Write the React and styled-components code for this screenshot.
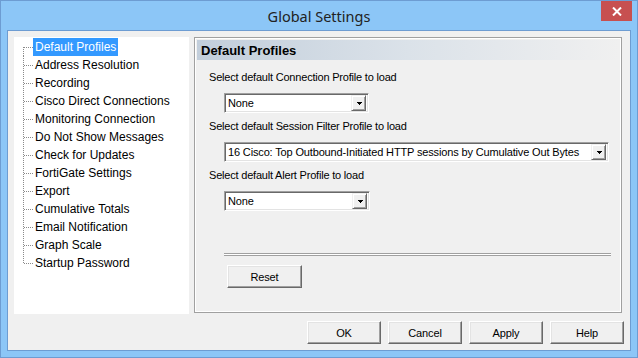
import React from 'react';
import styled, { createGlobalStyle } from 'styled-components';

const Global = createGlobalStyle`
  html, body { margin: 0; padding: 0; background: #8cc6f7; }
  body { width: 638px; height: 358px; overflow: hidden; }
  * { box-sizing: border-box; }
`;

const Window = styled.div`
  position: relative;
  width: 638px;
  height: 358px;
  border: 1px solid #6d9cd2;
  background: #8cc6f7;
  display: flex;
  flex-direction: column;
  font-family: "Liberation Sans", Arial, sans-serif;
`;

const TitleBar = styled.div`
  height: 29px;
  display: flex;
  align-items: center;
  justify-content: center;
  font-family: "Noto Sans", "Open Sans", sans-serif;
  font-size: 14.5px;
  color: #222;
  padding-top: 1px;
`;

const CloseButton = styled.div`
  position: absolute;
  top: 0;
  right: 5px;
  width: 31px;
  height: 20px;
  background: #c75050;
  display: flex;
  align-items: center;
  justify-content: center;
`;

const Client = styled.div`
  flex: 1;
  margin: 0 6px 6px 6px;
  border: 1px solid #6d9cd2;
  background: #f0f0f0;
  padding: 6px 6px 6px 6px;
  display: flex;
  flex-direction: column;
`;

const MainRow = styled.div`
  display: flex;
  align-items: flex-start;
  gap: 5px;
`;

const Tree = styled.div`
  width: 175px;
  height: 277px;
  background: #fff;
  padding-top: 1px;
  display: flex;
  flex-direction: column;
`;

const TreeItem = styled.div`
  height: 18px;
  display: flex;
  align-items: stretch;
`;

const dots = '#8a8a8a';

const Connector = styled.span`
  width: 19px;
  flex: none;
  background-image:
    repeating-linear-gradient(to right, ${dots} 0 1px, transparent 1px 2px),
    repeating-linear-gradient(to bottom, ${dots} 0 1px, transparent 1px 2px);
  background-repeat: no-repeat;
  background-size: 9px 1px, 1px ${p => (p.$first || p.$last ? '10px' : '18px')};
  background-position: 10px 9px, 9px ${p => (p.$first ? '9px' : '0px')};
`;

const TreeLabel = styled.span`
  padding: 0 2px;
  line-height: 18px;
  font-size: 12px;
  font-family: "Liberation Sans", Arial, sans-serif;
  white-space: nowrap;
  color: ${p => (p.$selected ? '#fff' : '#000')};
  background: ${p => (p.$selected ? '#3399ff' : 'transparent')};
`;

const Panel = styled.div`
  width: 428px;
  flex: none;
  height: 276px;
  border: 1px solid #a0a0a0;
  box-shadow: inset 1px 1px 0 #fff, inset -1px -1px 0 #fff;
  padding: 2px;
  display: flex;
  flex-direction: column;
`;

const PanelHeader = styled.div`
  height: 20px;
  padding-left: 4px;
  display: flex;
  align-items: center;
  background: linear-gradient(to right, #c2cedb 0%, #dbe2e9 50%, #f0f0f0 100%);
  font-weight: bold;
  font-size: 13px;
  color: #000;
`;

const PanelBody = styled.div`
  padding: 8px 0 0 12px;
  display: flex;
  flex-direction: column;
  align-items: flex-start;
`;

const FieldLabel = styled.div`
  height: 18px;
  line-height: 18px;
  font-size: 11px;
  letter-spacing: -0.2px;
  color: #000;
  white-space: nowrap;
`;

const Combo = styled.div`
  width: ${p => p.$w}px;
  height: 20px;
  margin: 7px 0 4px 15px;
  border-top: 1px solid #a0a0a0;
  border-left: 1px solid #a0a0a0;
  border-bottom: 1px solid #fff;
  border-right: 1px solid #fff;
  box-shadow: inset 1px 1px 0 #696969, inset -1px -1px 0 #e3e3e3;
  background: #fff;
  display: flex;
  align-items: center;
  padding: 0 2px 0 3px;
`;

const ComboText = styled.span`
  flex: 1;
  font-size: 11px;
  letter-spacing: -0.15px;
  color: #000;
  white-space: nowrap;
  overflow: hidden;
`;

const ComboArrow = styled.span`
  width: 15px;
  height: 16px;
  flex: none;
  background: #f0f0f0;
  border-top: 1px solid #f0f0f0;
  border-left: 1px solid #f0f0f0;
  border-right: 1px solid #696969;
  border-bottom: 1px solid #696969;
  box-shadow: inset 1px 1px 0 #fff, inset -1px -1px 0 #a0a0a0;
  display: flex;
  align-items: center;
  justify-content: center;
  padding-left: 1px;
`;

const Separator = styled.div`
  width: 387px;
  height: 3px;
  margin: 38px 0 0 15px;
  border-top: 1px solid #a0a0a0;
  border-bottom: 1px solid #a0a0a0;
  background: #fff;
`;

const Button = styled.div`
  width: ${p => p.$w || 74}px;
  height: 23px;
  flex: none;
  margin: ${p => p.$m || '0'};
  background: #f0f0f0;
  border-top: 1px solid #fff;
  border-left: 1px solid #fff;
  border-right: 1px solid #696969;
  border-bottom: 1px solid #696969;
  box-shadow: inset -1px -1px 0 #a0a0a0, inset 1px 1px 0 #e3e3e3;
  display: flex;
  align-items: center;
  justify-content: center;
  font-size: 11px;
  letter-spacing: -0.15px;
  color: #000;
`;

const ButtonRow = styled.div`
  margin-top: 7px;
  display: flex;
  justify-content: flex-end;
  gap: 7px;
`;

const Arrow = () => (
  <svg width="5" height="3" viewBox="0 0 5 3" shapeRendering="crispEdges">
    <rect x="0" y="0" width="5" height="1" fill="#000" />
    <rect x="1" y="1" width="3" height="1" fill="#000" />
    <rect x="2" y="2" width="1" height="1" fill="#000" />
  </svg>
);

const items = [
  'Default Profiles',
  'Address Resolution',
  'Recording',
  'Cisco Direct Connections',
  'Monitoring Connection',
  'Do Not Show Messages',
  'Check for Updates',
  'FortiGate Settings',
  'Export',
  'Cumulative Totals',
  'Email Notification',
  'Graph Scale',
  'Startup Password',
];

const fields = [
  { label: 'Select default Connection Profile to load', value: 'None', w: 145 },
  {
    label: 'Select default Session Filter Profile to load',
    value: '16 Cisco: Top Outbound-Initiated HTTP sessions by Cumulative Out Bytes',
    w: 385,
  },
  { label: 'Select default Alert Profile to load', value: 'None', w: 146 },
];

export default function App() {
  return (
    <>
      <Global />
      <Window>
        <TitleBar>Global Settings</TitleBar>
        <CloseButton>
          <svg width="10" height="9" viewBox="0 0 10 9">
            <path d="M1 0.5 L9 8.5 M9 0.5 L1 8.5" stroke="#fff" strokeWidth="2" />
          </svg>
        </CloseButton>
        <Client>
          <MainRow>
            <Tree>
              {items.map((t, i) => (
                <TreeItem key={t}>
                  <Connector $first={i === 0} $last={i === items.length - 1} />
                  <TreeLabel $selected={i === 0}>{t}</TreeLabel>
                </TreeItem>
              ))}
            </Tree>
            <Panel>
              <PanelHeader>Default Profiles</PanelHeader>
              <PanelBody>
                {fields.map(f => (
                  <React.Fragment key={f.label}>
                    <FieldLabel>{f.label}</FieldLabel>
                    <Combo $w={f.w}>
                      <ComboText>{f.value}</ComboText>
                      <ComboArrow>
                        <Arrow />
                      </ComboArrow>
                    </Combo>
                  </React.Fragment>
                ))}
                <Separator />
                <Button $w={75} $m="9px 0 0 18px">Reset</Button>
              </PanelBody>
            </Panel>
          </MainRow>
          <ButtonRow>
            <Button>OK</Button>
            <Button>Cancel</Button>
            <Button>Apply</Button>
            <Button>Help</Button>
          </ButtonRow>
        </Client>
      </Window>
    </>
  );
}
